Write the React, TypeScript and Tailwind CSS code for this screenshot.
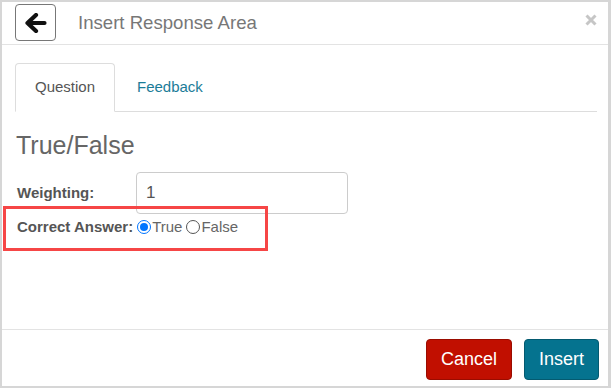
import React from "react";

export default function App() {
  return (
    <div
      className="relative w-[611px] h-[388px] bg-white"
      style={{ fontFamily: '"Liberation Sans", Arial, sans-serif' }}
    >
      <div className="flex flex-col w-full h-full border-t-2 border-l-2 border-b-2 border-r-[3px] border-[#d6d6d6]">
        {/* Header */}
        <div className="flex items-start h-[43px] border-b border-[#e3e3e3] pl-[13px] pr-[11px]">
          <button className="mt-[2px] w-[41px] h-[37px] rounded-[4px] border border-[#777] flex items-center justify-center bg-white">
            <svg width="22" height="20" viewBox="0 0 22 20">
              <path
                d="M11 2 L2.5 10 L11 18 M2.5 10 L19.5 10"
                fill="none"
                stroke="#111"
                strokeWidth="4.2"
                strokeLinecap="round"
                strokeLinejoin="round"
              />
            </svg>
          </button>
          <div className="ml-[22px] mt-[9px] text-[18.6px] leading-[24px] text-[#777]">
            Insert Response Area
          </div>
          <div className="ml-auto mt-[12px]">
            <svg width="12" height="12" viewBox="0 0 12 12">
              <path
                d="M1.5 1.5 L10.5 10.5 M10.5 1.5 L1.5 10.5"
                stroke="#c6c6c6"
                strokeWidth="3"
                strokeLinecap="butt"
              />
            </svg>
          </div>
        </div>

        {/* Body */}
        <div className="flex-1 pl-[13px] pr-[11px] pt-[18px]">
          <div className="flex border-b border-[#ddd] h-[49px]">
            <div className="w-[100px] h-[49px] -mb-px border border-[#ddd] border-b-white rounded-t-[4px] bg-white flex items-center justify-center text-[15px] text-[#555]">
              Question
            </div>
            <div className="ml-[2px] px-[20px] flex items-center text-[15px] text-[#1b7c98]">
              Feedback
            </div>
          </div>

          <div className="mt-[19px] text-[25px] leading-[28px] text-[#666] pl-[1px]">
            True/False
          </div>

          <div className="mt-[13px] flex items-center h-[42px]">
            <div className="w-[121px] pl-[2px] text-[15px] font-bold text-[#555]">
              Weighting:
            </div>
            <div className="w-[212px] h-[42px] border border-[#ccc] rounded-[4px] flex items-center pl-[9px] text-[17px] text-[#555]">
              1
            </div>
          </div>

          <div className="flex items-center h-[26px] pl-[2px] text-[15px]">
            <span className="font-bold text-[#555]">Correct Answer:</span>
            <span className="ml-[4px] w-[14px] h-[14px] rounded-full border-[1.5px] border-[#0075ff] flex items-center justify-center">
              <span className="w-[8px] h-[8px] rounded-full bg-[#0075ff]" />
            </span>
            <span className="ml-[1px] text-[#666]">True</span>
            <span className="ml-[4px] w-[14px] h-[14px] rounded-full border border-[#555]" />
            <span className="ml-[1px] text-[#666]">False</span>
          </div>
        </div>

        {/* Footer */}
        <div className="h-[57px] border-t border-[#e3e3e3] flex justify-end items-start pt-[9px] pr-[9px] gap-[12px]">
          <button className="w-[86px] h-[41px] rounded-[4px] bg-[#c10f00] border border-[#9a0c00] text-white text-[18px]">
            Cancel
          </button>
          <button className="w-[75px] h-[41px] rounded-[4px] bg-[#05738f] border border-[#045a70] text-white text-[18px]">
            Insert
          </button>
        </div>
      </div>

      {/* Annotation */}
      <div className="absolute left-[3px] top-[206px] w-[265px] h-[45px] border-[3px] border-[#f64646] pointer-events-none" />
    </div>
  );
}
